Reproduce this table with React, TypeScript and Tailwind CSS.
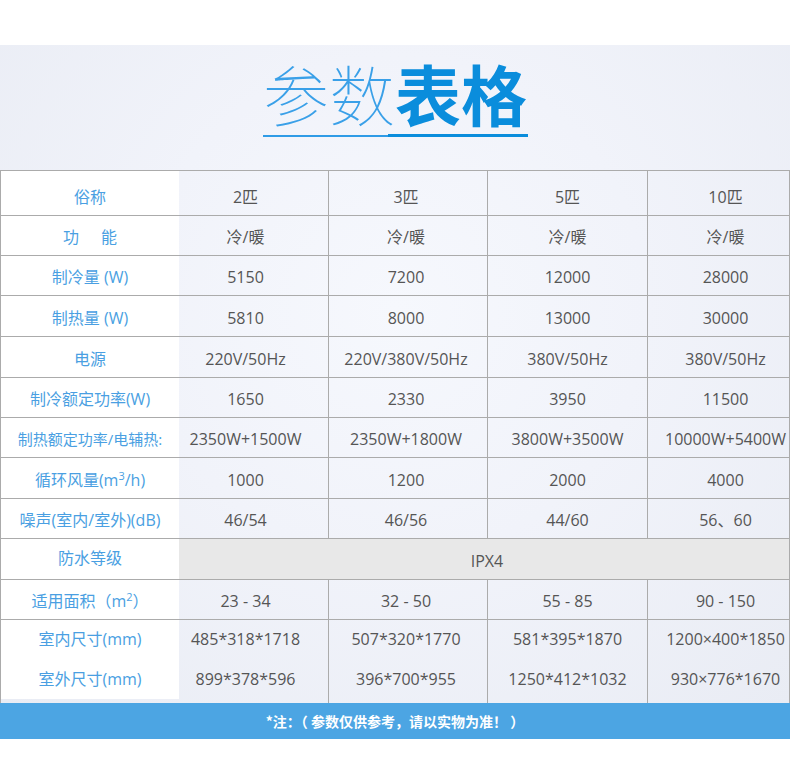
import React from "react";

const FONT = { fontFamily: '"Open Sans", "Noto Sans CJK SC", sans-serif' };
const CJK = { fontFamily: '"Noto Sans CJK SC", sans-serif' };

type Row = { label: React.ReactNode; values: React.ReactNode[]; h: string; small?: boolean };

const rows: Row[] = [
  { label: <span className="inline-flex"><span>功</span><span className="ml-[22px]">能</span></span>, values: ["冷/暖", "冷/暖", "冷/暖", "冷/暖"], h: "h-[40px]" },
  { label: "制冷量 (W)", values: ["5150", "7200", "12000", "28000"], h: "h-[40px]" },
  { label: "制热量 (W)", values: ["5810", "8000", "13000", "30000"], h: "h-[41px]" },
  { label: "电源", values: ["220V/50Hz", "220V/380V/50Hz", "380V/50Hz", "380V/50Hz"], h: "h-[41px]" },
  { label: "制冷额定功率(W)", values: ["1650", "2330", "3950", "11500"], h: "h-[40px]" },
  { label: "制热额定功率/电辅热:", values: ["2350W+1500W", "2350W+1800W", "3800W+3500W", "10000W+5400W"], h: "h-[40px]", small: true },
  { label: <span>循环风量(m<sup className="text-[11px] -top-[6px]">3</sup>/h)</span>, values: ["1000", "1200", "2000", "4000"], h: "h-[41px]" },
  { label: "噪声(室内/室外)(dB)", values: ["46/54", "46/56", "44/60", "56、60"], h: "h-[40px]" },
];

const rows2: Row[] = [
  { label: <span>适用面积（m<sup className="text-[11px] -top-[6px]">2</sup>）</span>, values: ["23 - 34", "32 - 50", "55 - 85", "90 - 150"], h: "h-[40px]" },
];

const colW = ["w-[178px]", "w-[150px]", "w-[159px]", "w-[160px]", "w-[141px]"];
const colPad = ["pr-[16px]", "pr-[4px]", "", "pl-[14px]"];

function Label({ children, small, pt = "pt-[3px]" }: { children: React.ReactNode; small?: boolean; pt?: string }) {
  return (
    <div className={`${colW[0]} shrink-0 bg-white flex items-center justify-center text-[#4a9fe2] ${small ? "text-[15px]" : "text-[16px]"} ${pt} whitespace-nowrap`}>
      {children}
    </div>
  );
}

function Val({ children, i, pt = "pt-[3px]" }: { children: React.ReactNode; i: number; pt?: string }) {
  return (
    <div className={`${colW[i + 1]} ${colPad[i]} shrink-0 flex items-center justify-center text-[#555555] text-[16px] ${pt} whitespace-nowrap ${i < 3 ? "border-r border-[#ababab]" : ""}`}>
      {children}
    </div>
  );
}

function DataRow({ r }: { r: Row }) {
  return (
    <div className={`flex ${r.h} border-b border-[#ababab]`}>
      <Label small={r.small}>{r.label}</Label>
      {r.values.map((v, i) => (
        <Val key={i} i={i}>{v}</Val>
      ))}
    </div>
  );
}

export default function App() {
  return (
    <div className="w-[790px] h-[762px] bg-white overflow-hidden" style={FONT}>
      <div className="h-[45px] bg-white" />
      <div className="bg-[radial-gradient(ellipse_at_50%_40%,#f6f8fd_0%,#f1f3fa_45%,#e9ecf4_100%)]">
        {/* Title */}
        <div className="h-[125px] flex flex-col items-center pt-[14px]">
          <div className="flex text-[66px] leading-[66px]" style={CJK}>
            <span className="font-thin text-[#3aa0e8]">参数</span>
            <span className="font-bold text-[#0a8ddc]">表格</span>
          </div>
          <div className="flex items-center mt-[9px] w-[265px]">
            <div className="w-[125px] h-[2px] bg-[#2f9be6]" />
            <div className="w-[140px] h-[3px] bg-[#0a8ddc]" />
          </div>
        </div>
        {/* Table */}
        <div className="w-[790px] border-l border-r border-t border-[#ababab]">
          <div className="flex h-[45px] border-b border-[#ababab]">
            <Label pt="pt-[7px]">俗称</Label>
            {["2匹", "3匹", "5匹", "10匹"].map((v, i) => (
              <Val key={i} i={i} pt="pt-[7px]">{v}</Val>
            ))}
          </div>
          {rows.map((r, i) => (
            <DataRow key={i} r={r} />
          ))}
          <div className="flex h-[41px] border-b border-[#ababab]">
            <Label>
              <span className="-mt-[6px]">防水等级</span>
            </Label>
            <div className="flex-1 bg-[#e8e8e8] flex items-center justify-center text-[#555555] text-[16px] pt-[4px] pl-[6px]">IPX4</div>
          </div>
          {rows2.map((r, i) => (
            <DataRow key={i} r={r} />
          ))}
          <div className="flex h-[83px]">
            <div className={`${colW[0]} shrink-0 flex flex-col`}>
              <div className="h-[79px] bg-white flex flex-col text-[#4a9fe2] text-[16px]">
                <div className="h-[38px] flex items-center justify-center">室内尺寸(mm)</div>
                <div className="h-[41px] flex items-center justify-center">室外尺寸(mm)</div>
              </div>
            </div>
            {[
              ["485*318*1718", "899*378*596"],
              ["507*320*1770", "396*700*955"],
              ["581*395*1870", "1250*412*1032"],
              ["1200×400*1850", "930×776*1670"],
            ].map((pair, i) => (
              <div
                key={i}
                className={`${colW[i + 1]} ${colPad[i]} shrink-0 flex flex-col text-[#555555] text-[16px] ${i < 3 ? "border-r border-[#ababab]" : ""}`}
              >
                <div className="h-[38px] flex items-center justify-center whitespace-nowrap">{pair[0]}</div>
                <div className="h-[41px] flex items-center justify-center whitespace-nowrap">{pair[1]}</div>
              </div>
            ))}
          </div>
        </div>
      </div>
      {/* Footer */}
      <div className="h-[36px] bg-[#4ca5e3] flex items-center justify-center text-white text-[14px] font-bold" style={CJK}>
        *注：（ 参数仅供参考，请以实物为准！ ）
      </div>
    </div>
  );
}
